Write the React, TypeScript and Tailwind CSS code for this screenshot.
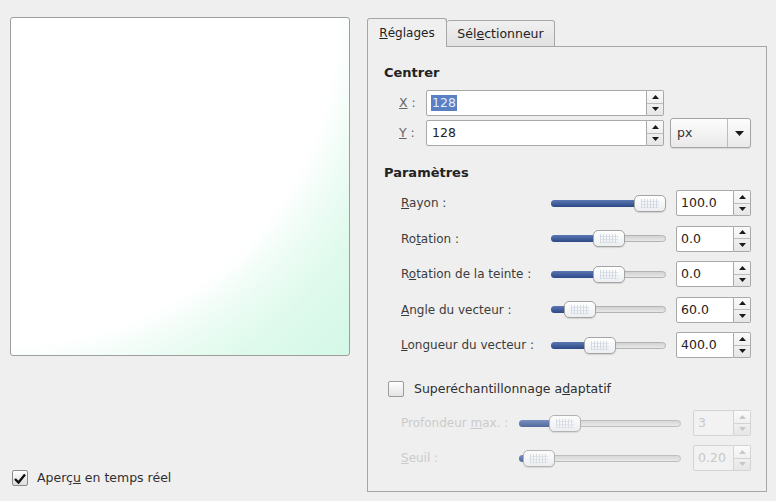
import React from 'react'

const SpinButtons = ({ disabled = false }: { disabled?: boolean }) => (
  <div
    className={`flex h-full w-[17px] flex-col border border-l-0 ${
      disabled ? 'border-[#d4d4d4]' : 'border-[#a9a9a9]'
    } rounded-r-[2px] bg-[linear-gradient(#fafafa,#e6e6e6)]`}
  >
    <div className={`flex flex-1 items-center justify-center border-b ${disabled ? 'border-[#d4d4d4]' : 'border-[#bdbdbd]'}`}>
      <svg width="7" height="4" viewBox="0 0 7 4">
        <path d="M0 4 L3.5 0 L7 4 Z" fill={disabled ? '#c8c8c8' : '#1a1a1a'} />
      </svg>
    </div>
    <div className="flex flex-1 items-center justify-center">
      <svg width="7" height="4" viewBox="0 0 7 4">
        <path d="M0 0 L7 0 L3.5 4 Z" fill={disabled ? '#c8c8c8' : '#1a1a1a'} />
      </svg>
    </div>
  </div>
)

const Slider = ({ width, pos }: { width: number; pos: number }) => (
  <div className="relative h-[17px]" style={{ width }}>
    <div className="absolute left-0 right-0 top-[5px] h-[7px] rounded-full border border-[#b3b3b3] bg-[linear-gradient(#d2d2d2,#e8e8e8)]" />
    <div
      className="absolute left-0 top-[5px] h-[7px] rounded-full bg-[linear-gradient(#5b77b3,#2c4987)]"
      style={{ width: pos + 16 }}
    />
    <div
      className="absolute top-0 flex h-[17px] w-[32px] items-center justify-center rounded-[5px] border border-[#a3a3a3] bg-[linear-gradient(#ffffff,#eceef1)] shadow-[0_1px_1px_rgba(0,0,0,0.12)]"
      style={{ left: pos }}
    >
      <div className="h-[9px] w-[18px] bg-[repeating-linear-gradient(90deg,#d3d9e2_0_1px,transparent_1px_3px),repeating-linear-gradient(0deg,#dfe3ea_0_1px,transparent_1px_3px)]" />
    </div>
  </div>
)

const ParamRow = ({ label, value, pos }: { label: React.ReactNode; value: string; pos: number }) => (
  <div className="flex h-[26px] items-center pl-[33px]">
    <div className="w-[150px] text-[12px] text-[#3c3c3c]">{label}</div>
    <Slider width={115} pos={pos} />
    <div className="ml-[10px] flex h-full w-[58px] items-center rounded-l-[2px] border border-[#a9a9a9] bg-white pl-[4px] text-[#222]">
      {value}
    </div>
    <SpinButtons />
  </div>
)

const DisabledRow = ({ label, value, pos }: { label: React.ReactNode; value: string; pos: number }) => (
  <div className="flex h-[26px] items-center pl-[33px]">
    <div className="w-[118px] text-[12px] text-[#cbcbcb]">{label}</div>
    <div className="opacity-80">
      <Slider width={162} pos={pos} />
    </div>
    <div className="ml-[12px] flex h-full w-[41px] items-center rounded-l-[2px] border border-[#d4d4d4] bg-[#f2f2f2] pl-[4px] text-[#c8c8c8]">
      {value}
    </div>
    <SpinButtons disabled />
  </div>
)

export default function App() {
  return (
    <div className="flex h-[501px] w-[776px] bg-[#efefef] font-['DejaVu_Sans',sans-serif] text-[12.5px] leading-[16px] text-[#333]">
      {/* preview */}
      <div className="flex w-[357px] flex-col pb-[15px] pl-[10px] pt-[17px]">
        <div className="h-[339px] w-[340px] rounded-[3px] border border-[#9e9e9e] bg-[radial-gradient(circle_at_0_0,#ffffff_325px,#ecfcf4_365px,#dffaed_405px,#d3f8e6_480px)]" />
        <div className="mt-auto flex items-center gap-[9px] pl-[2px]">
          <div className="flex h-[16px] w-[16px] items-center justify-center rounded-[2px] border border-[#8c8c8c] bg-[linear-gradient(#ffffff,#dcdcdc)]">
            <svg width="12" height="11" viewBox="0 0 12 11">
              <path d="M1 6 L4.5 9.5 L11 1.5" fill="none" stroke="#111" strokeWidth="2.4" />
            </svg>
          </div>
          <span className="text-[#2f2f2f]">
            Aperç<span className="underline">u</span> en temps réel
          </span>
        </div>
      </div>

      {/* settings */}
      <div className="ml-[10px] flex w-[400px] flex-col pb-[9px] pt-[18px]">
        <div className="flex h-[29px] items-end">
          <div className="flex h-[29px] w-[80px] items-center justify-center rounded-t-[3px] border border-b-0 border-[#a6a6a6] bg-[#efefef] text-[12px] text-[#222]">
            <span className="underline">R</span>églages
          </div>
          <div className="flex h-[27px] w-[108px] items-center justify-center rounded-t-[3px] border border-l-0 border-[#a6a6a6] bg-[linear-gradient(#f0f0f0,#e1e1e1)] text-[#222]">
            Sél<span className="underline">e</span>ctionneur
          </div>
          <div className="flex-1 border-b border-[#a6a6a6]" />
        </div>

        <div className="flex flex-1 flex-col border border-t-0 border-[#a6a6a6] pt-[18px]">
          <div className="pl-[16px] text-[13px] font-bold text-[#222]">Centrer</div>

          <div className="mt-[9px] flex flex-col gap-[4px]">
            <div className="flex h-[26px] items-center pl-[31px]">
              <div className="w-[27px] text-[#666]">
                <span className="underline">X</span> :
              </div>
              <div className="flex h-full w-[221px] items-center rounded-l-[2px] border border-[#a9a9a9] bg-white pl-[4px]">
                <span className="bg-[#5a7fc2] px-[1px] text-[#e3ebf8]">128</span>
              </div>
              <SpinButtons />
            </div>
            <div className="flex h-[26px] items-center pl-[31px]">
              <div className="w-[27px] text-[#666]">
                <span className="underline">Y</span> :
              </div>
              <div className="flex h-full w-[221px] items-center rounded-l-[2px] border border-[#a9a9a9] bg-white pl-[5px] text-[#222]">
                128
              </div>
              <SpinButtons />
              <div className="ml-[6px] flex h-[30px] w-[81px] items-center rounded-[3px] border border-[#a4a4a4] bg-[linear-gradient(#fdfdfd,#e9e9e9)] shadow-[0_1px_1px_rgba(0,0,0,0.1)]">
                <span className="flex-1 pl-[6px] text-[#333]">px</span>
                <div className="flex h-full w-[23px] items-center justify-center border-l border-[#bcbcbc]">
                  <svg width="9" height="5" viewBox="0 0 9 5">
                    <path d="M0 0 L9 0 L4.5 5 Z" fill="#1a1a1a" />
                  </svg>
                </div>
              </div>
            </div>
          </div>

          <div className="mt-[19px] pl-[16px] text-[13px] font-bold text-[#222]">Paramètres</div>

          <div className="mt-[9px] flex flex-col gap-[9.5px]">
            <ParamRow label={<><span className="underline">R</span>ayon :</>} value="100.0" pos={83} />
            <ParamRow label={<>Ro<span className="underline">t</span>ation :</>} value="0.0" pos={42} />
            <ParamRow label={<>R<span className="underline">o</span>tation de la teinte :</>} value="0.0" pos={42} />
            <ParamRow label={<><span className="underline">A</span>ngle du vecteur :</>} value="60.0" pos={13} />
            <ParamRow label={<><span className="underline">L</span>ongueur du vecteur :</>} value="400.0" pos={33} />
          </div>

          <div className="mt-[23px] flex h-[16px] items-center gap-[10px] pl-[20px]">
            <div className="h-[16px] w-[16px] rounded-[2px] border border-[#9a9a9a] bg-[linear-gradient(#ffffff,#e4e4e4)]" />
            <span className="text-[#2f2f2f]">
              Superéchantillonnage a<span className="underline">d</span>aptatif
            </span>
          </div>

          <div className="mt-[13px] flex flex-col gap-[9px]">
            <DisabledRow label={<>Profondeur <span className="underline">m</span>ax. :</>} value="3" pos={30} />
            <DisabledRow label={<><span className="underline">S</span>euil :</>} value="0.20" pos={4} />
          </div>
        </div>
      </div>
    </div>
  )
}
